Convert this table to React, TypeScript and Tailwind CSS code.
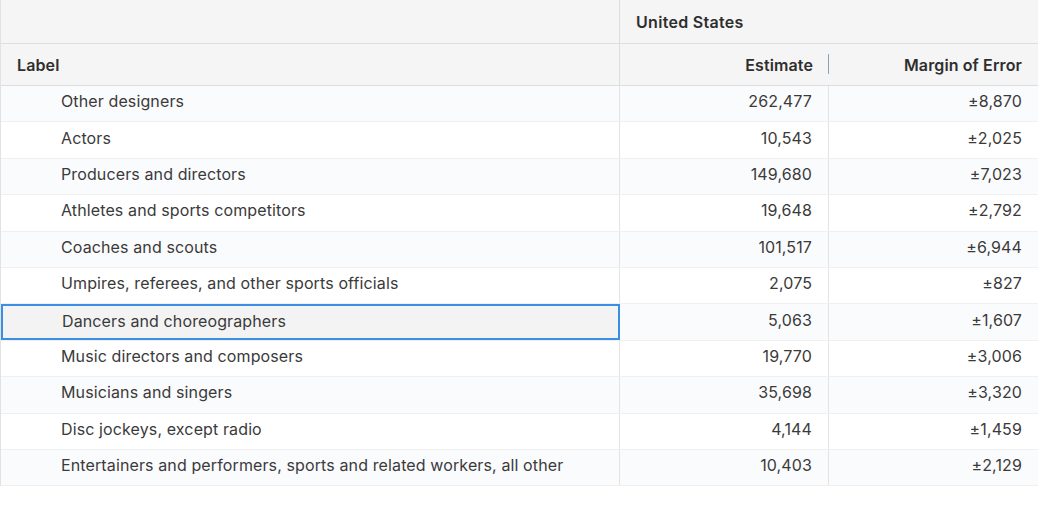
const rows: [string, string, string][] = [
  ["Other designers", "262,477", "±8,870"],
  ["Actors", "10,543", "±2,025"],
  ["Producers and directors", "149,680", "±7,023"],
  ["Athletes and sports competitors", "19,648", "±2,792"],
  ["Coaches and scouts", "101,517", "±6,944"],
  ["Umpires, referees, and other sports officials", "2,075", "±827"],
  ["Dancers and choreographers", "5,063", "±1,607"],
  ["Music directors and composers", "19,770", "±3,006"],
  ["Musicians and singers", "35,698", "±3,320"],
  ["Disc jockeys, except radio", "4,144", "±1,459"],
  ["Entertainers and performers, sports and related workers, all other", "10,403", "±2,129"],
];

export default function App() {
  return (
    <div className="h-[506px] w-[1038px] overflow-hidden bg-white font-['Inter',sans-serif] text-[16px] tracking-[0.12px] text-[#3a3a3a]">
      <div className="border-l border-[#e2e2e2]">
        <div className="flex h-[44px] border-b border-[#dedede] bg-[#f5f5f5]">
          <div className="w-[619px] border-r border-[#dedede]" />
          <div className="flex flex-1 items-center pl-4 pt-px font-semibold tracking-[0.3px] text-[#2e2e2e]">
            United States
          </div>
        </div>
        <div className="flex h-[42px] border-b border-[#dedede] bg-[#f5f5f5] font-semibold text-[#2e2e2e]">
          <div className="flex w-[619px] items-center border-r border-[#dedede] pl-4">
            Label
          </div>
          <div className="relative flex w-[209px] items-center justify-end pr-4">
            Estimate
            <span className="absolute right-0 top-[10px] h-[20px] w-px bg-[#8ba1b5]" />
          </div>
          <div className="flex flex-1 items-center justify-end pr-4">Margin of Error</div>
        </div>
        {rows.map(([label, est, moe], i) => {
          const selected = i === 6;
          return (
            <div
              key={label}
              className={`flex h-[36.4px] border-b border-[#f0f0f0] ${i % 2 === 0 ? "bg-[#fafbfd]" : "bg-white"}`}
            >
              <div
                className={
                  selected
                    ? "flex w-[619px] items-center border-2 border-[#3a8ee6] bg-[#f3f3f3] pb-[3px] pl-[59px]"
                    : "flex w-[619px] items-center border-r border-[#e4e4e4] pb-[5px] pl-[60px]"
                }
              >
                {label}
              </div>
              <div className="flex w-[209px] items-center justify-end border-r border-[#e4e4e4] pb-[5px] pr-4">
                {est}
              </div>
              <div className="flex flex-1 items-center justify-end pb-[5px] pr-4">{moe}</div>
            </div>
          );
        })}
      </div>
    </div>
  );
}
